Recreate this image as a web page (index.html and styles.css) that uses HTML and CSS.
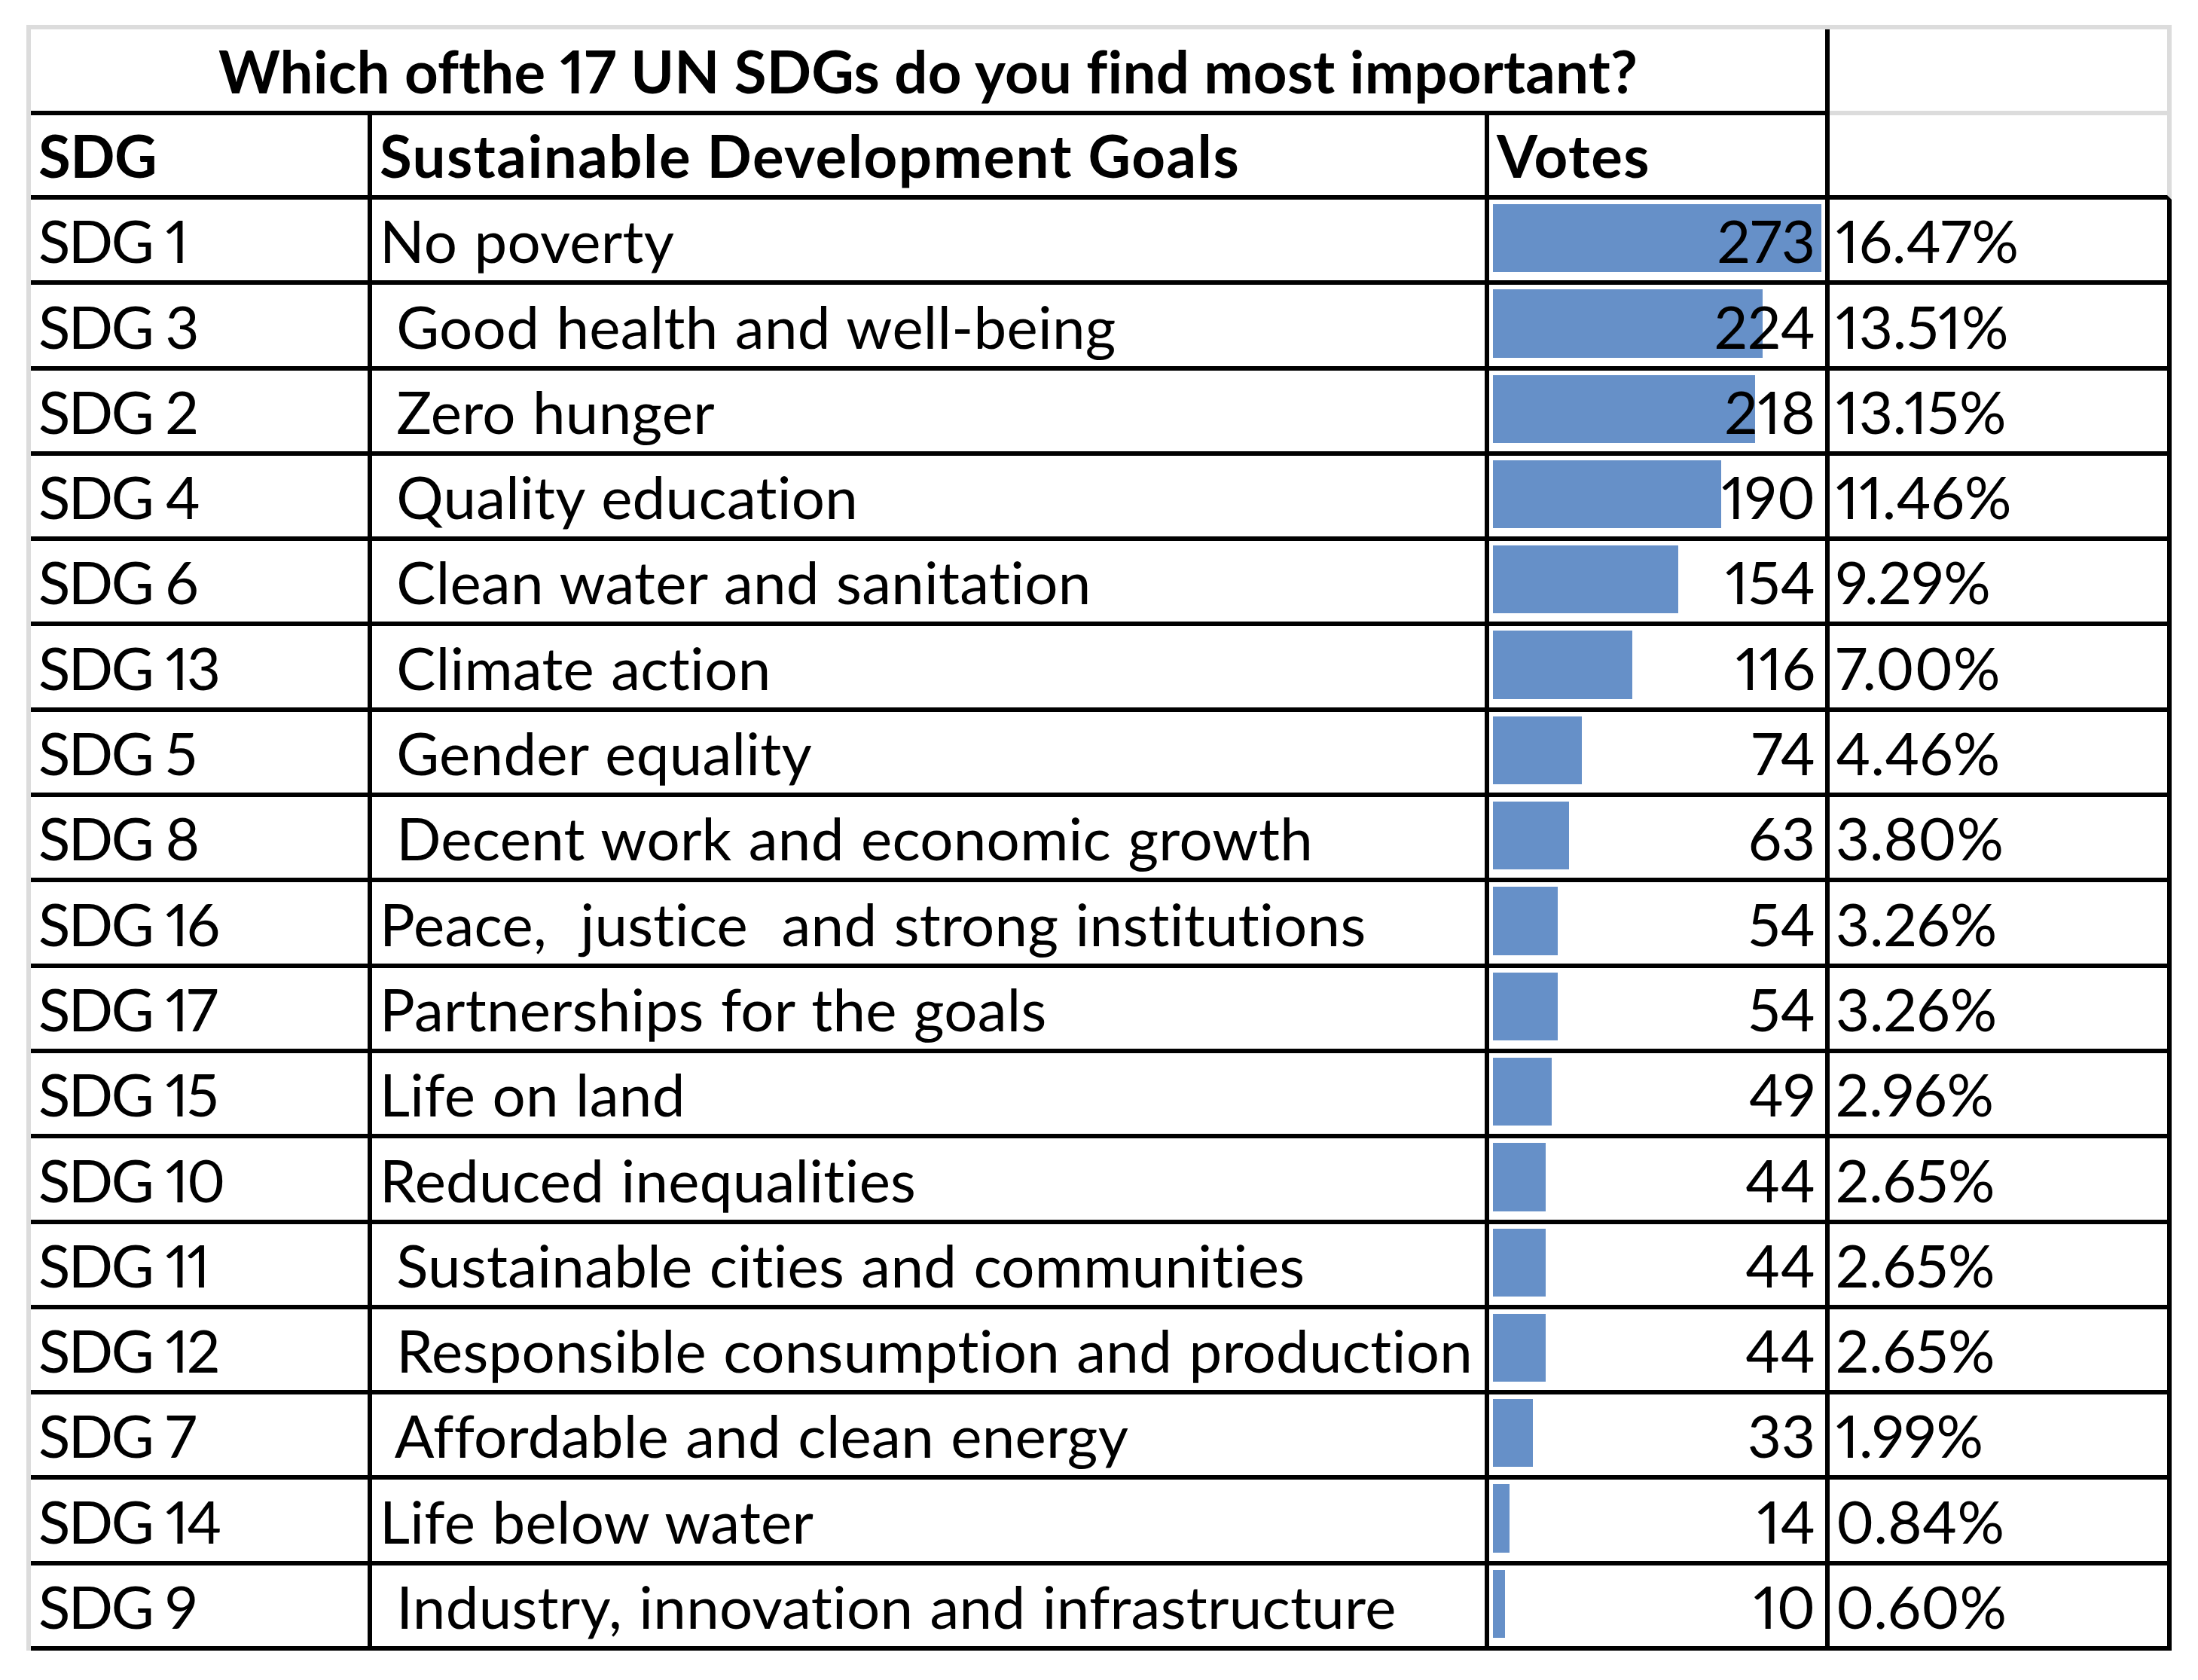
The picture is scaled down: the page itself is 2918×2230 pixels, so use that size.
FILE: index.html
```html
<!DOCTYPE html>
<html lang="en">
<head>
<meta charset="utf-8">
<title>Which of the 17 UN SDGs do you find most important?</title>
<link rel="stylesheet" href="styles.css">
</head>
<body>
<div class="sheet">
<div class="cell title">Which ofthe 17 UN SDGs do you find most important?</div>
<div class="cell blank"></div>

<div class="cell head code">SDG</div>
<div class="cell head desc">Sustainable Development Goals</div>
<div class="cell head">Votes</div>
<div class="cell hblank"></div>

<div class="cell code">SDG 1</div>
<div class="cell desc">No poverty</div>
<div class="cell votes"><span class="bar" style="width:calc((100% - 10px) * 1.0000)"></span><span class="num">273</span></div>
<div class="cell pct">16.47%</div>

<div class="cell code">SDG 3</div>
<div class="cell desc"> Good health and well-being</div>
<div class="cell votes"><span class="bar" style="width:calc((100% - 10px) * 0.8205)"></span><span class="num">224</span></div>
<div class="cell pct">13.51%</div>

<div class="cell code">SDG 2</div>
<div class="cell desc"> Zero hunger</div>
<div class="cell votes"><span class="bar" style="width:calc((100% - 10px) * 0.7985)"></span><span class="num">218</span></div>
<div class="cell pct">13.15%</div>

<div class="cell code">SDG 4</div>
<div class="cell desc"> Quality education</div>
<div class="cell votes"><span class="bar" style="width:calc((100% - 10px) * 0.6960)"></span><span class="num">190</span></div>
<div class="cell pct">11.46%</div>

<div class="cell code">SDG 6</div>
<div class="cell desc"> Clean water and sanitation</div>
<div class="cell votes"><span class="bar" style="width:calc((100% - 10px) * 0.5641)"></span><span class="num">154</span></div>
<div class="cell pct">9.29%</div>

<div class="cell code">SDG 13</div>
<div class="cell desc"> Climate action</div>
<div class="cell votes"><span class="bar" style="width:calc((100% - 10px) * 0.4249)"></span><span class="num">116</span></div>
<div class="cell pct">7.00%</div>

<div class="cell code">SDG 5</div>
<div class="cell desc"> Gender equality</div>
<div class="cell votes"><span class="bar" style="width:calc((100% - 10px) * 0.2711)"></span><span class="num">74</span></div>
<div class="cell pct">4.46%</div>

<div class="cell code">SDG 8</div>
<div class="cell desc"> Decent work and economic growth</div>
<div class="cell votes"><span class="bar" style="width:calc((100% - 10px) * 0.2308)"></span><span class="num">63</span></div>
<div class="cell pct">3.80%</div>

<div class="cell code">SDG 16</div>
<div class="cell desc">Peace,  justice  and strong institutions</div>
<div class="cell votes"><span class="bar" style="width:calc((100% - 10px) * 0.1978)"></span><span class="num">54</span></div>
<div class="cell pct">3.26%</div>

<div class="cell code">SDG 17</div>
<div class="cell desc">Partnerships for the goals</div>
<div class="cell votes"><span class="bar" style="width:calc((100% - 10px) * 0.1978)"></span><span class="num">54</span></div>
<div class="cell pct">3.26%</div>

<div class="cell code">SDG 15</div>
<div class="cell desc">Life on land</div>
<div class="cell votes"><span class="bar" style="width:calc((100% - 10px) * 0.1795)"></span><span class="num">49</span></div>
<div class="cell pct">2.96%</div>

<div class="cell code">SDG 10</div>
<div class="cell desc">Reduced inequalities</div>
<div class="cell votes"><span class="bar" style="width:calc((100% - 10px) * 0.1612)"></span><span class="num">44</span></div>
<div class="cell pct">2.65%</div>

<div class="cell code">SDG 11</div>
<div class="cell desc"> Sustainable cities and communities</div>
<div class="cell votes"><span class="bar" style="width:calc((100% - 10px) * 0.1612)"></span><span class="num">44</span></div>
<div class="cell pct">2.65%</div>

<div class="cell code">SDG 12</div>
<div class="cell desc"> Responsible consumption and production</div>
<div class="cell votes"><span class="bar" style="width:calc((100% - 10px) * 0.1612)"></span><span class="num">44</span></div>
<div class="cell pct">2.65%</div>

<div class="cell code">SDG 7</div>
<div class="cell desc"> Affordable and clean energy</div>
<div class="cell votes"><span class="bar" style="width:calc((100% - 10px) * 0.1209)"></span><span class="num">33</span></div>
<div class="cell pct">1.99%</div>

<div class="cell code">SDG 14</div>
<div class="cell desc">Life below water</div>
<div class="cell votes"><span class="bar" style="width:calc((100% - 10px) * 0.0513)"></span><span class="num">14</span></div>
<div class="cell pct">0.84%</div>

<div class="cell code">SDG 9</div>
<div class="cell desc"> Industry, innovation and infrastructure</div>
<div class="cell votes"><span class="bar" style="width:calc((100% - 10px) * 0.0366)"></span><span class="num">10</span></div>
<div class="cell pct">0.60%</div>
</div>
</body>
</html>
```

FILE: styles.css
```css
html, body {
  margin: 0;
  padding: 0;
  background: #ffffff;
}

.sheet {
  display: grid;
  grid-template-columns: 453px 1483px 452px 454px;
  grid-template-rows: 114px 112px repeat(17, 113.3px);
  width: fit-content;
  margin: 33px 0 0 35px;
  border-top: 6px solid #dcdcdc;
  border-left: 6px solid #dcdcdc;
  font-family: Lato, "Open Sans", sans-serif;
  font-size: 78px;
  font-variant-ligatures: none;
  font-variant-numeric: proportional-nums;
  color: #000000;
}

.cell {
  box-sizing: border-box;
  position: relative;
  display: flex;
  align-items: flex-end;
  padding: 0 10px 14px 10px;
  line-height: 78px;
  white-space: pre;
  overflow: hidden;
  border-right: 6px solid #000000;
  border-bottom: 6px solid #000000;
}

.title {
  grid-column: 1 / 4;
  justify-content: center;
  font-weight: bold;
  letter-spacing: 0.2px;
}

.blank {
  border-right-color: #dcdcdc;
  border-bottom-color: #dcdcdc;
}

.hblank {
  border-right-color: #dcdcdc;
}

.head {
  font-weight: bold;
  letter-spacing: 1.5px;
}

.code {
  letter-spacing: -2.5px;
}

.head.code {
  letter-spacing: -0.5px;
}

.desc {
  padding-left: 10px;
  padding-right: 0;
  word-spacing: 2px;
  letter-spacing: 0.3px;
}

.head.desc {
  letter-spacing: 1.5px;
  word-spacing: 0;
}

.votes {
  justify-content: flex-end;
  padding-right: 13px;
}

.pct {
  padding-left: 8px;
}

.bar {
  position: absolute;
  left: 5px;
  top: 6px;
  bottom: 11px;
  background: #6690c8;
}

.num {
  position: relative;
}
```
